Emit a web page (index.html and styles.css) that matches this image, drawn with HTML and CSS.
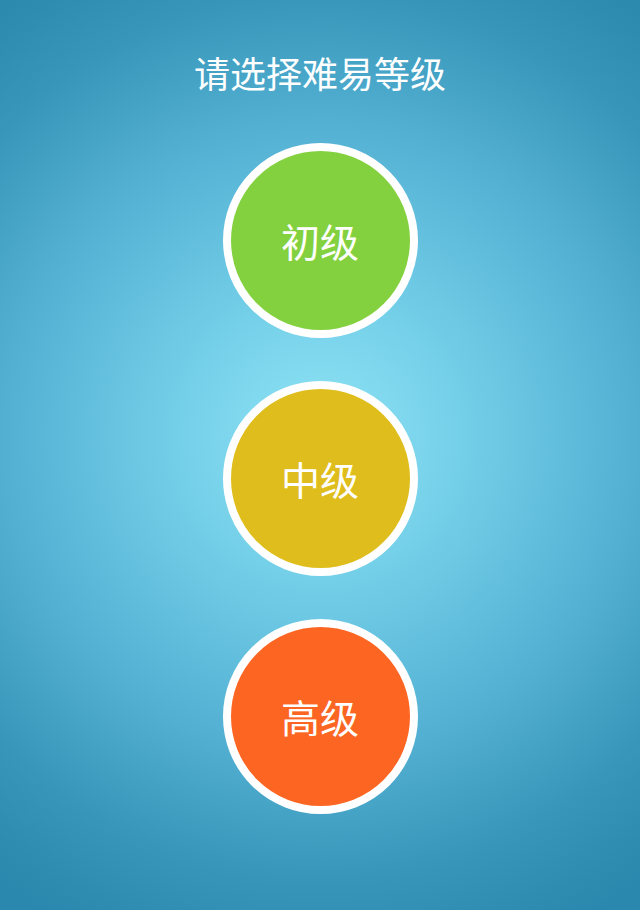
FILE: index.html
```html
<!DOCTYPE html>
<html lang="zh-CN">
<head>
<meta charset="utf-8">
<title>请选择难易等级</title>
<link rel="stylesheet" href="styles.css">
</head>
<body>
<main class="screen">
  <h1 class="title">请选择难易等级</h1>
  <div class="levels">
    <button class="level level-easy">初级</button>
    <button class="level level-mid">中级</button>
    <button class="level level-hard">高级</button>
  </div>
</main>
</body>
</html>
```

FILE: styles.css
```css
html, body {
  margin: 0;
  padding: 0;
}
body {
  width: 640px;
  height: 910px;
  overflow: hidden;
  font-family: "Noto Sans CJK SC", "Noto Sans", sans-serif;
}
.screen {
  width: 640px;
  height: 910px;
  box-sizing: border-box;
  padding-top: 54px;
  display: flex;
  flex-direction: column;
  align-items: center;
  background: radial-gradient(circle 560px at 50% 48%, #8fe4f6 0px, #70cce6 160px, #52afd2 320px, #3796b9 440px, #2a87ad 550px);
}
.title {
  margin: 0;
  font-size: 36px;
  line-height: 36px;
  font-weight: 400;
  color: #ffffff;
  letter-spacing: 0;
}
.levels {
  margin-top: 53px;
  display: flex;
  flex-direction: column;
  align-items: center;
  gap: 43px;
}
.level {
  width: 195px;
  height: 195px;
  box-sizing: border-box;
  border: 8px solid #ffffff;
  border-radius: 50%;
  display: flex;
  align-items: center;
  justify-content: center;
  padding: 0;
  font-family: "Noto Sans CJK SC", "Noto Sans", sans-serif;
  font-size: 39px;
  line-height: 1;
  color: #ffffff;
  cursor: pointer;
}
.level-easy { background: #84d13f; }
.level-mid { background: #dfbd1c; }
.level-hard { background: #fd6523; }
```
